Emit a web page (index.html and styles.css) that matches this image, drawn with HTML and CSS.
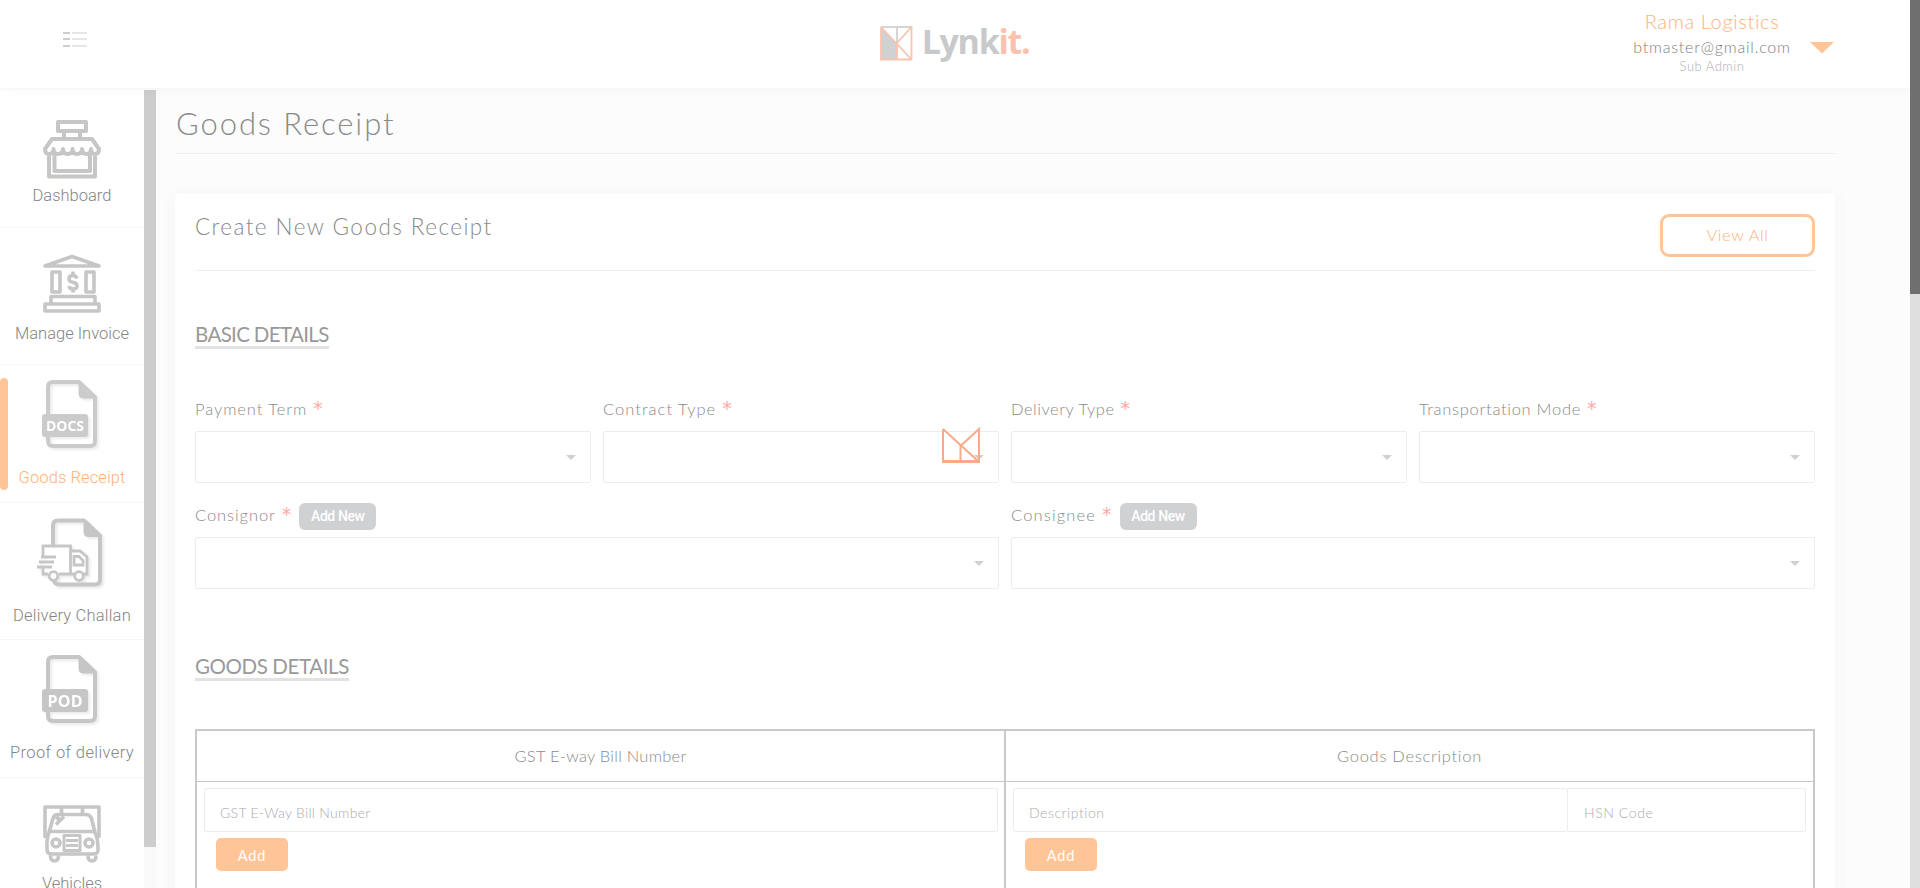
FILE: index.html
```html
<!DOCTYPE html>
<html lang="en">
<head>
<meta charset="utf-8">
<title>Goods Receipt</title>
<link rel="stylesheet" href="styles.css">
</head>
<body>
<div class="app">
  <header class="header">
    <svg class="menu-icon" width="24" height="16" viewBox="0 0 24 16">
      <path d="M0 1h7M0 7h7M0 14h7" stroke="#cdcdcd" stroke-width="2"/>
      <path d="M9 1h15M9 7h15M9 14h15" stroke="#e6e6e6" stroke-width="2"/>
    </svg>
    <div class="logo">
      <svg width="33" height="35" viewBox="880 26 33 35" fill="none">
        <path d="M881 27.500L897 43V60H881Z" fill="#cfd1d3"/>
        <path d="M881 27H911M897 27V43" stroke="#d3d5d7" stroke-width="2"/>
        <path d="M881 27V59.500H911.500V27L897 43V59M881 27L911 59" stroke="#fac3af" stroke-width="1.800"/>
      </svg>
      <span class="logo-text">Lynk<span class="logo-accent">it.</span></span>
    </div>
    <div class="account">
      <div class="account-info">
        <div class="company">Rama Logistics</div>
        <div class="email">btmaster@gmail.com</div>
        <div class="role">Sub Admin</div>
      </div>
      <svg class="account-caret" width="24" height="12" viewBox="0 0 24 12"><path d="M0 0H24L12 11.500Z" fill="#ffc597"/></svg>
    </div>
  </header>
  <div class="body">
    <nav class="sidebar">
      <a class="item">
        <svg width="80" height="82" viewBox="32 100 80 82" fill="none" stroke="#c6c6c6" stroke-width="4" stroke-linejoin="round">
          <path d="M58 122H86V131H58ZM64 132V138M80 132V138M52 139H92L99 149Q99 154 95 154Q91 154 91 149Q91 154 86.500 154Q82 154 82 149Q82 154 77 154Q72.500 154 72.500 149Q72.500 154 67.500 154Q63 154 63 149Q63 154 58 154Q53.500 154 53.500 149Q53.500 154 49 154Q45 154 45 149ZM49 154V176.500H95V154"/>
          <path d="M54.500 154V171H90V154"/>
        </svg>
        <span class="item-label w-dash">Dashboard</span>
      </a>
      <a class="item">
        <svg width="80" height="82" viewBox="32 237.500 80 82" fill="none" stroke="#c6c6c6" stroke-width="3.600" stroke-linejoin="round">
          <path d="M45 265.500L72 256L99 265.500ZM52 271.500H60V291.500H52ZM86 271.500H94V291.500H86ZM51 302V296H95V302M45 303.500H99V310.500H45Z"/>
          <path d="M77 278Q76 275 73 275Q69 275 69 278.500Q69 281 73 281.800Q77 282.500 77 285.500Q77 288.500 73 288.500Q69.500 288.500 69 285.500M73 271V275M73 288V292"/>
        </svg>
        <span class="item-label w-inv">Manage Invoice</span>
      </a>
      <a class="item item-tall active">
        <svg class="doc" width="80" height="82" viewBox="32 375 80 82" fill="none" stroke="#cbcbcb" stroke-width="4">
          <path d="M48 416V387Q48 382 53 382H79L95 397V441Q95 446 90 446H53Q48 446 48 441V436"/>
          <path d="M79 381V394Q79 398 83 398H96Z" fill="#cbcbcb" stroke-width="1"/>
          <rect x="42" y="414" width="46" height="23" rx="3" fill="#cbcbcb" stroke="none"/>
          <text class="doc-text" x="65" y="431.300" text-anchor="middle" textLength="38">DOCS</text>
        </svg>
        <span class="item-label w-goods">Goods Receipt</span>
      </a>
      <a class="item item-tall">
        <svg class="doc" width="80" height="82" viewBox="32 512.500 80 82" fill="none" stroke="#c6c6c6" stroke-width="4">
          <path d="M53 545V525Q53 520 58 520H84L100 535V579Q100 584 95 584H60Q55 584 54 580"/>
          <path d="M84 519V532Q84 536 88 536H101Z" fill="#c6c6c6" stroke-width="1"/>
          <g stroke-width="2.800">
            <path fill="#fff" stroke="none" d="M43 546H70V551H81L88 558V574H43Z"/>
            <path d="M43 555V545.500H70.500V573.500M70.500 550.500H80L87 556.500V573.500H83M43 567V573.500H48M59 573.500H74M74 556H79L83 560V564.500H74ZM41 556.500H56M39 561.500H54M37 566.500H52"/>
            <circle cx="53.500" cy="575.500" r="4.300" fill="#fff"/><circle cx="79" cy="575.500" r="4.300" fill="#fff"/>
          </g>
        </svg>
        <span class="item-label w-chal">Delivery Challan</span>
      </a>
      <a class="item item-tall">
        <svg class="doc" width="80" height="82" viewBox="32 650 80 82" fill="none" stroke="#c6c6c6" stroke-width="4">
          <path d="M48 691V662Q48 657 53 657H79L95 672V716Q95 721 90 721H53Q48 721 48 716V711"/>
          <path d="M79 656V669Q79 673 83 673H96Z" fill="#c6c6c6" stroke-width="1"/>
          <rect x="42" y="689" width="46" height="23" rx="3" fill="#c6c6c6" stroke="none"/>
          <text class="doc-text doc-text-lg" x="65" y="706.500" text-anchor="middle" textLength="35">POD</text>
        </svg>
        <span class="item-label w-pod">Proof of delivery</span>
      </a>
      <a class="item">
        <svg width="80" height="82" viewBox="32 787.500 80 82" fill="none" stroke="#c6c6c6" stroke-width="3.600" stroke-linejoin="round">
          <path d="M49 836H45V806.500H99V836H95M61.500 807V814M82.500 807V814M49 832L53 818Q54 814 58 814H86Q90 814 91.500 818L95 832M49 831H95M49 832Q46.500 838 47 848Q47 853.500 51 853.500H93Q99 853.500 98 848Q98 838 95 832"/>
          <circle cx="56" cy="842.500" r="4"/><circle cx="89" cy="842.500" r="4"/>
          <path d="M64 835H80V850H64ZM66 840H78M66 845H78" stroke-width="3"/>
          <path d="M50.500 855Q50.500 860.500 54.500 860.500Q58.500 860.500 58.500 855M88 855Q88 860.500 92 860.500Q96 860.500 96 855M56 819L59 816M56 824L64 816"/>
        </svg>
        <span class="item-label w-veh">Vehicles</span>
      </a>
    </nav>
    <div class="side-scroll"><div class="side-thumb"></div></div>
    <main class="main">
      <h1 class="page-title"><span>Goods Receipt</span></h1>
      <section class="card">
        <div class="card-head">
          <h2 class="card-title">Create New Goods Receipt</h2>
          <a class="view-all">View All</a>
        </div>
        <h3 class="section-title basic">BASIC DETAILS</h3>
        <div class="grid four">
          <div class="field"><div class="label"><span class="l-pay">Payment Term</span><i class="req">*</i></div><div class="select"></div></div>
          <div class="field"><div class="label"><span class="l-con">Contract Type</span><i class="req">*</i></div><div class="select"></div></div>
          <div class="field"><div class="label"><span class="l-del">Delivery Type</span><i class="req">*</i></div><div class="select"></div></div>
          <div class="field"><div class="label"><span class="l-tra">Transportation Mode</span><i class="req">*</i></div><div class="select"></div></div>
        </div>
        <div class="grid two">
          <div class="field"><div class="label"><span class="l-nor">Consignor</span><i class="req">*</i><b class="add-new">Add New</b></div><div class="select"></div></div>
          <div class="field"><div class="label"><span class="l-nee">Consignee</span><i class="req">*</i><b class="add-new">Add New</b></div><div class="select"></div></div>
        </div>
        <h3 class="section-title goods">GOODS DETAILS</h3>
        <div class="table">
          <div class="col">
            <div class="th"><span class="t-gst">GST E-way Bill Number</span></div>
            <div class="td td-first">
              <div class="inputs"><div class="input grow"><span class="p-gst">GST E-Way Bill Number</span></div></div>
              <a class="add">Add</a>
            </div>
          </div>
          <div class="col">
            <div class="th"><span class="t-desc">Goods Description</span></div>
            <div class="td">
              <div class="inputs"><div class="input grow"><span class="p-desc">Description</span></div><div class="input hsn"><span class="p-hsn">HSN Code</span></div></div>
              <a class="add">Add</a>
            </div>
          </div>
        </div>
      </section>
    </main>
  </div>
  <svg class="loader" width="40" height="40" viewBox="941 425 40 40" fill="none" stroke="#f9ab89" stroke-width="2">
    <path d="M943 429V461.500H979V429L960.500 446V461M943 429L978 461"/>
    <path d="M942 461.500H980" stroke-width="3"/>
  </svg>
  <div class="page-scroll"><div class="page-thumb"></div></div>
</div>
</body>
</html>
```
FILE: styles.css
```css
* { box-sizing: border-box; }
body { margin: 0; font-family: Lato, "Liberation Sans", sans-serif; font-weight: 300; color: #8a8a8a; }
h1, h2, h3 { margin: 0; font-weight: 300; }
i, b { font-style: normal; }
span, a, h2, h3 { white-space: nowrap; }
.app { position: relative; width: 1920px; height: 888px; overflow: hidden; background: #fcfcfc; display: flex; flex-direction: column; padding-right: 10px; }

.header { position: relative; z-index: 2; flex: none; height: 88px; background: #fff; box-shadow: 0 0 14px rgba(0, 0, 0, .045); display: flex; justify-content: space-between; }
.menu-icon { margin: 32px 0 0 63px; }
.logo { display: flex; margin: 26px 0 0 189px; gap: 9px; }
.logo-text { font: 700 34px/36px "Open Sans", sans-serif; letter-spacing: -1.3px; color: #c8c9ca; margin-top: -3px; }
.logo-accent { color: #fac2ad; }
.account { display: flex; margin-right: 76px; gap: 19px; }
.account-info { width: 158px; text-align: center; padding-top: 9px; }
.company { font-size: 20px; line-height: 25px; color: #ffb37a; letter-spacing: .65px; }
.email { font-size: 16px; line-height: 25px; color: #808080; letter-spacing: .8px; }
.role { font-size: 13px; line-height: 14px; color: #b0b0b0; letter-spacing: .5px; }
.account-caret { margin-top: 42px; }

.body { flex: 1; min-height: 0; display: flex; padding-top: 2px; }
.sidebar { flex: none; width: 144px; background: #fff; overflow: hidden; }
.item { position: relative; height: 137.500px; padding-top: 10px; border-bottom: 1px solid #f6f6f6; display: flex; flex-direction: column; align-items: center; font-family: Roboto, sans-serif; font-size: 16.500px; color: #858585; }
.item svg { flex: none; }
.doc { filter: drop-shadow(2px 2px 1px rgba(0, 0, 0, .08)); }
.doc-text { font: 700 14px "Open Sans", sans-serif; fill: #fff; stroke: none; }
.doc-text-lg { font-size: 16px; }
.item-label { line-height: 20px; margin-top: 4px; }
.item-tall .item-label { margin-top: 11px; }
.w-chal { letter-spacing: .2px; }
.w-pod { letter-spacing: .4px; }
.w-goods { letter-spacing: .1px; }
.active { color: #ffb177; }
.active::before { content: ""; position: absolute; left: 0; top: 13px; width: 8px; height: 112px; border-radius: 4px; background: #ffc597; }
.side-scroll { flex: none; width: 12px; background: #f9f9f9; }
.side-thumb { height: 757px; background: #cdcdcd; }

.main { flex: 1; padding: 0 75px 0 19px; }
.page-title { height: 64px; border-bottom: 1px solid #eee; font-size: 31px; line-height: 36px; padding: 15px 0 0 1px; letter-spacing: 1.900px; }
.card { margin-top: 40px; height: 720px; background: #fff; padding: 20px; box-shadow: 0 0 18px rgba(0, 0, 0, .035); }
.card-head { display: flex; justify-content: space-between; height: 57px; border-bottom: 1px solid #eee; }
.card-title { font-size: 22.500px; line-height: 28px; letter-spacing: 1.450px; margin-top: -1px; }
.view-all { width: 155px; height: 43px; border: 3px solid #ffc597; border-radius: 9px; color: #ffb27a; text-align: center; font-size: 16.500px; line-height: 36px; letter-spacing: .6px; }
.section-title { width: fit-content; height: 27px; border-bottom: 3px solid #e2e2e2; font-size: 20.500px; line-height: 24px; font-weight: 400; color: #999; }
.basic { margin-top: 51px; letter-spacing: -.65px; }
.goods { margin-top: 65px; letter-spacing: -.4px; }

.grid { display: grid; gap: 12px; }
.four { grid-template-columns: repeat(4, 1fr); margin-top: 45px; }
.two { grid-template-columns: repeat(2, 1fr); margin-top: 17px; }
.label { height: 37px; display: flex; align-items: baseline; font-size: 16.500px; line-height: 30px; }
.two .label { line-height: 31px; }
.l-pay, .l-nor { letter-spacing: .92px; }
.l-con { letter-spacing: 1.02px; }
.l-del { letter-spacing: .52px; }
.l-tra { letter-spacing: .7px; }
.l-nee { letter-spacing: 1.15px; }
.req { color: #ffa9a5; font-size: 19px; margin-left: 6px; font-weight: 400; font-family: "DejaVu Sans", sans-serif; line-height: 20px; }
.add-new { align-self: flex-start; margin: 3px 0 0 8px; width: 77px; height: 27px; border-radius: 6px; background: #d0d1d2; color: #fff; font: 500 14px/26px Roboto, sans-serif; letter-spacing: -.4px; text-align: center; }
.select { position: relative; height: 52px; border: 1px solid #ededed; border-radius: 2px; }
.select::after { content: ""; position: absolute; right: 14px; top: 23px; border: 5px solid transparent; border-top-color: #d0d0d0; border-bottom: 0; }

.table { display: grid; grid-template-columns: 809px 809px; margin-top: 48px; height: 200px; border: 2px solid #c9c9c9; border-right: 0; }
.col { border-right: 2px solid #c9c9c9; }
.th { height: 51px; border-bottom: 1px solid #c9c9c9; text-align: center; font-size: 16.500px; line-height: 50px; }
.t-gst { letter-spacing: .25px; }
.t-desc { letter-spacing: .7px; }
.td { padding: 6px 7px; }
.td-first { padding-right: 6px; }
.inputs { display: flex; }
.input { height: 44px; border: 1px solid #ededed; border-radius: 2px; padding-left: 15px; font-size: 14px; line-height: 48px; color: #a9abb0; }
.p-gst { letter-spacing: .3px; }
.p-desc { letter-spacing: .55px; }
.p-hsn { letter-spacing: .6px; }
.grow { flex: 1; }
.hsn { width: 239px; margin-left: -1px; padding-left: 16px; }
.add { display: block; width: 72px; height: 33px; margin: 6px 0 0 12px; border-radius: 5px; background: #ffc597; color: #fff; font-weight: 400; font-size: 14.500px; line-height: 36px; letter-spacing: .8px; text-align: center; }

.loader { position: absolute; left: 941px; top: 425px; z-index: 3; }
.page-scroll { position: absolute; z-index: 4; right: 0; top: 0; width: 10px; height: 888px; background: #dedede; }
.page-thumb { height: 294px; background: #6f6f6f; }
```
